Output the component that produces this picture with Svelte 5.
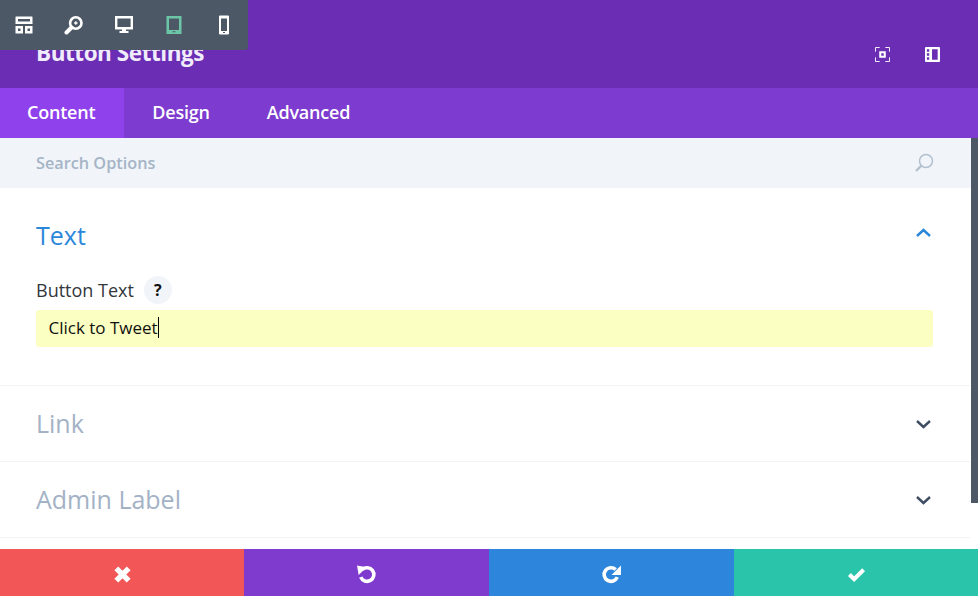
<script>
  const tabs = ["Content", "Design", "Advanced"];
</script>

<div class="modal">
  <!-- floating view mode bar sits over the header -->
  <div class="viewbar">
    <svg viewBox="0 0 20 20" class="vicon"><path d="M1.500 2q0-.5.5-.5h16q.5 0 .5.500v7h-17zM4 4v2.500h12V4zM1.500 11h7.500v7.500H1.500zM4 13.500v2.500h2.500v-2.500zM11 11h7.500v7.500H11zM13.500 13.500v2.500H16v-2.500z" fill="#fff" fill-rule="evenodd"/></svg>
    <svg viewBox="0 0 20 20" class="vicon"><circle cx="11.800" cy="8" r="5.700" fill="none" stroke="#fff" stroke-width="2.600"/><path d="M7.500 12.500L2.500 17.500" stroke="#fff" stroke-width="4" stroke-linecap="round"/><path d="M11.800 6.300v3.400M10.100 8h3.400" stroke="#fff" stroke-width="1.300"/></svg>
    <svg viewBox="0 0 20 20" class="vicon"><path d="M1 1h18v13.500h-7v1.500h2.500v2h-9v-2H8v-1.500H1zM3.400 3.400v8.700h13.200V3.400z" fill="#fff" fill-rule="evenodd"/></svg>
    <svg viewBox="0 0 20 20" class="vicon"><path d="M2.500 1h15v18h-15zM5 3.500v11.500h10V3.500zM8.500 16.300v1h3v-1z" fill="#6cc5a6" fill-rule="evenodd"/></svg>
    <svg viewBox="0 0 20 20" class="vicon"><path d="M5 1.500q0-1 1-1h8q1 0 1 1v17q0 1-1 1H6q-1 0-1-1zM7 3.500v12.500h6V3.500zM9 17v1h2v-1z" fill="#fff" fill-rule="evenodd"/></svg>
  </div>

  <header class="head">
    <h1>Button Settings</h1>
    <div class="head-icons">
      <svg viewBox="0 0 16 16" class="hicon"><path d="M.5 5V.5H5M11 .5h4.500V5M15.500 11v4.500H11M5 15.500H.5V11" fill="none" stroke="#fff" stroke-width="1"/><path d="M4.500 4.500h7v7h-7zM6.700 6.700v2.600h2.600V6.700z" fill="#fff" fill-rule="evenodd"/></svg>
      <svg viewBox="0 0 16 16" class="hicon"><path d="M0 1q0-1 1-1h14q1 0 1 1v14q0 1-1 1H1q-1 0-1-1zM2 2.500v2.500h2.500V2.500zM2 6.700v2.600h2.500V6.700zM2 11v2.500h2.500V11zM7.500 2.500v11H13.500v-11z" fill="#fff" fill-rule="evenodd"/></svg>
    </div>
  </header>

  <nav class="tabs">
    {#each tabs as tab, i}
      <div class="tab" class:active={i === 0}>{tab}</div>
    {/each}
  </nav>

  <div class="body">
    <div class="search">
      <span>Search Options</span>
      <svg viewBox="0 0 20 20" class="search-icon"><circle cx="12" cy="8" r="6.500" fill="none" stroke="#b3c0cf" stroke-width="1.500"/><path d="M7.500 12.500l-5.500 5.500" stroke="#b3c0cf" stroke-width="2.400"/></svg>
    </div>

    <section class="group open">
      <div class="group-head">
        <h2 class="blue">Text</h2>
        <svg viewBox="0 0 16 10" class="chev"><path d="M1.500 8L8 2l6.500 6" fill="none" stroke="#2b87da" stroke-width="2.400"/></svg>
      </div>
      <div class="field-label">
        <span>Button Text</span>
        <span class="help">?</span>
      </div>
      <div class="input">Click to Tweet<i class="caret"></i></div>
    </section>

    <section class="group">
      <div class="group-head">
        <h2>Link</h2>
        <svg viewBox="0 0 16 10" class="chev"><path d="M1.500 2L8 8l6.500-6" fill="none" stroke="#3f4d63" stroke-width="2.400"/></svg>
      </div>
    </section>

    <section class="group">
      <div class="group-head">
        <h2>Admin Label</h2>
        <svg viewBox="0 0 16 10" class="chev"><path d="M1.500 2L8 8l6.500-6" fill="none" stroke="#3f4d63" stroke-width="2.400"/></svg>
      </div>
    </section>

    <div class="scrollbar"></div>
  </div>

  <footer class="actions">
    <div class="act red">
      <svg viewBox="0 0 16 16" class="aicon"><path d="M2.800 2.800l10.400 10.400M13.200 2.800L2.800 13.200" stroke="#fff" stroke-width="4.600"/></svg>
    </div>
    <div class="act purple">
      <svg viewBox="0 0 20 20" class="aicon big"><path d="M6 5.300a6.500 6.500 0 1 1-1.500 7.200" fill="none" stroke="#fff" stroke-width="3.400"/><path d="M1 1.500l9 1.500-7.500 7.500z" fill="#fff"/></svg>
    </div>
    <div class="act blue-bg">
      <svg viewBox="0 0 20 20" class="aicon big"><path d="M14 5.300a6.500 6.500 0 1 0 1.500 7.200" fill="none" stroke="#fff" stroke-width="3.400"/><path d="M19 1.500v9h-9z" fill="#fff"/></svg>
    </div>
    <div class="act green">
      <svg viewBox="0 0 20 16" class="aicon"><path d="M2.500 8l5 5L17.500 3" fill="none" stroke="#fff" stroke-width="4.200"/></svg>
    </div>
  </footer>
</div>

<style>
  :global(body) {
    margin: 0;
    background: #fff;
  }

  .modal {
    position: relative;
    width: 978px;
    height: 596px;
    overflow: hidden;
    display: flex;
    flex-direction: column;
    font-family: "Open Sans", "Noto Sans", sans-serif;
  }

  .viewbar {
    position: absolute;
    top: 0;
    left: 0;
    width: 248px;
    height: 50px;
    background: #4c5866;
    border-bottom-right-radius: 3px;
    display: flex;
    align-items: center;
    padding-left: 14px;
    gap: 30px;
    box-sizing: border-box;
    z-index: 2;
  }

  .vicon {
    width: 20px;
    height: 20px;
    flex: none;
  }

  .head {
    height: 88px;
    flex: none;
    background: #6a2db3;
    display: flex;
    align-items: center;
    justify-content: space-between;
    padding: 0 38px 0 36px;
    box-sizing: border-box;
  }

  .head h1 {
    margin: 16px 0 0;
    font-size: 22.500px;
    font-weight: 700;
    letter-spacing: -0.45px;
    color: #f0ecfb;
  }

  .head-icons {
    display: flex;
    gap: 35px;
    margin-top: 20px;
  }

  .hicon {
    width: 15px;
    height: 15px;
  }

  .tabs {
    height: 50px;
    flex: none;
    background: #7d3bcf;
    display: flex;
  }

  .tab {
    padding: 0 28.500px;
    line-height: 48px;
    font-size: 18px;
    font-weight: 600;
    color: #fff;
    letter-spacing: -0.22px;
  }

  .tab.active {
    background: #8f42ec;
    padding: 0 28.500px 0 27px;
  }

  .body {
    position: relative;
    flex: 1;
  }

  .scrollbar {
    position: absolute;
    top: 0;
    right: 0;
    width: 7px;
    height: 365px;
    background: #4c5866;
  }

  .search {
    height: 50px;
    background: #f1f5f9;
    display: flex;
    align-items: center;
    justify-content: space-between;
    padding: 0 44px 0 36px;
    font-size: 16.250px;
    font-weight: 600;
    color: #a5b4c6;
  }

  .search-icon {
    width: 20px;
    height: 20px;
  }

  .group {
    height: 76px;
    margin-right: 8px;
    padding: 0 37px 0 36px;
    border-bottom: 1px solid #f1f3f5;
    box-sizing: border-box;
  }

  .group.open {
    height: 198px;
  }

  .group-head {
    height: 75px;
    display: flex;
    align-items: center;
    justify-content: space-between;
    padding-right: 1px;
  }

  .open .group-head {
    height: 95px;
  }

  h2 {
    margin: -2px 0 0;
    font-size: 25px;
    font-weight: 400;
    color: #a3b2c5;
  }

  h2.blue {
    color: #2b87da;
  }

  .chev {
    width: 17px;
    height: 10px;
  }

  .open .chev {
    margin-top: -5px;
  }

  .field-label {
    display: flex;
    align-items: center;
    gap: 10px;
    height: 28px;
    margin-top: -7px;
    font-size: 18px;
    color: #32373c;
  }

  .help {
    width: 28px;
    height: 28px;
    border-radius: 50%;
    background: #f1f5f9;
    text-align: center;
    line-height: 28px;
    font-size: 16px;
    font-weight: 700;
    color: #111;
  }

  .input {
    margin-top: 6px;
    height: 37px;
    background: #fbffc2;
    border-radius: 3px;
    padding: 0 0 2px 12.500px;
    box-sizing: border-box;
    display: flex;
    align-items: center;
    font-size: 17px;
    color: #111;
  }

  .caret {
    width: 1px;
    height: 21px;
    background: #000;
  }

  .actions {
    height: 47px;
    flex: none;
    display: grid;
    grid-template-columns: 244px 245px 245px 244px;
  }

  .act {
    display: flex;
    align-items: center;
    justify-content: center;
    padding-top: 3px;
  }

  .red {
    background: #f25656;
  }

  .purple {
    background: #7e3bce;
  }

  .blue-bg {
    background: #2e86dc;
  }

  .green {
    background: #29c4a9;
  }

  .aicon {
    width: 19px;
    height: 19px;
  }

  .aicon.big {
    width: 21px;
    height: 21px;
  }
</style>
